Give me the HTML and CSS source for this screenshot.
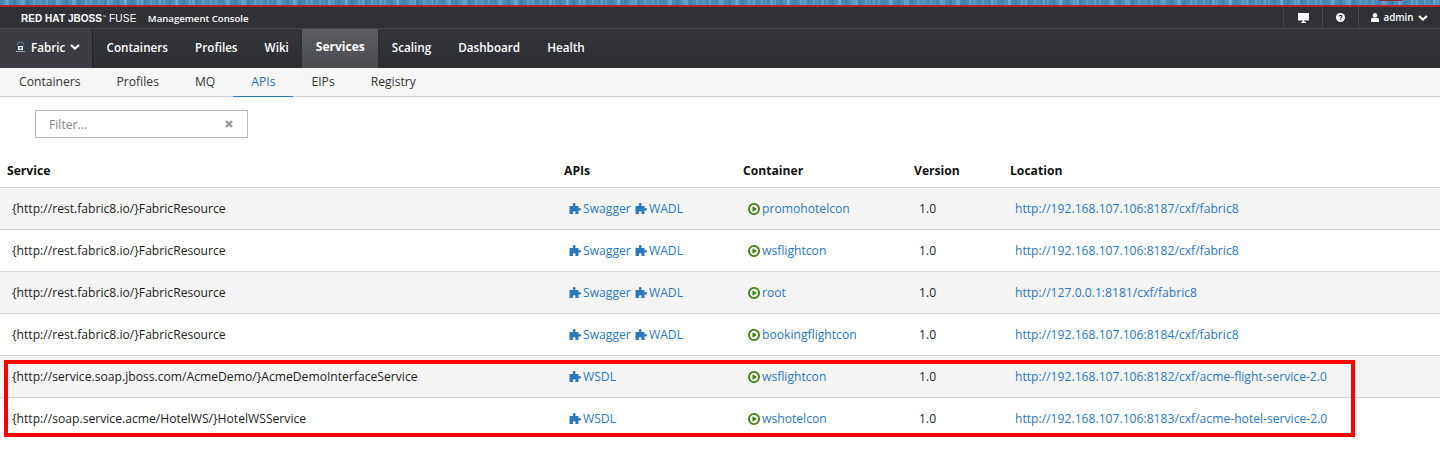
FILE: index.html
```html
<!DOCTYPE html>
<html lang="en">
<head>
    <meta charset="UTF-8">
    <meta name="viewport" content="width=device-width, initial-scale=1.0">
    <title>Red Hat JBoss Fuse Management Console</title>
    <link rel="stylesheet" href="styles.css">
</head>
<body>
    <svg class="defs" width="0" height="0">
        <symbol id="puzzle" viewBox="0 0 12 12">
            <path fill="currentColor" d="M3.800 1.500C3.800.6 4.400 0 5.200 0s1.400.6 1.400 1.500c0 .7-.4 1-.4 1.500H9.500v2.400c.5 0 .8-.4 1.300-.4.700 0 1.200.6 1.200 1.300s-.5 1.300-1.200 1.300c-.5 0-.8-.4-1.300-.4V11H6.300c0-.6.3-.9.300-1.400 0-.8-.6-1.300-1.400-1.300s-1.400.5-1.400 1.300c0 .5.300.8.300 1.400H.5V3h3.700c0-.5-.4-.8-.4-1.500z"/>
        </symbol>
        <symbol id="play" viewBox="0 0 12 12">
            <path fill="#3f7d0f" fill-rule="evenodd" d="M6 0a6 6 0 1 1 0 12A6 6 0 0 1 6 0zm0 1.800a4.200 4.200 0 1 0 0 8.400 4.200 4.200 0 0 0 0-8.400zM4.500 3.300 9 6 4.500 8.700z"/>
        </symbol>
    </svg>

    <div class="strip"></div>

    <div class="brandbar">
        <div class="brand">
            <span class="brand-name">RED HAT JBOSS<sup>&#8482;</sup> <span class="brand-fuse">FUSE</span></span>
            <span class="brand-sub">Management Console</span>
        </div>
        <div class="util">
            <div class="util-item util-screen">
                <svg width="11" height="10" viewBox="0 0 11 10"><path fill="#fff" d="M0 0h11v7.500H6.500V9H8v1H3V9h1.500V7.500H0z"/></svg>
            </div>
            <div class="util-item util-help">
                <svg width="9" height="9" viewBox="0 0 9 9"><circle cx="4.500" cy="4.500" r="4.500" fill="#fff"/><path fill="none" stroke="#2f3135" stroke-width="1.200" d="M3.100 3.500c0-1.700 2.800-1.700 2.800 0 0 1-1.400 1-1.400 2"/><path fill="#2f3135" d="M3.900 6.300h1.200v1.100H3.900z"/></svg>
            </div>
            <div class="util-item util-user">
                <svg width="8" height="9" viewBox="0 0 8 9"><circle cx="4" cy="2.300" r="2.200" fill="#fff"/><path fill="#fff" d="M0 9V6.500C0 5.300 1 4.800 2 4.800h4c1 0 2 .5 2 1.700V9z"/></svg>
                <span>admin</span>
                <svg class="chev" width="10" height="6" viewBox="0 0 10 6"><path fill="none" stroke="#fff" stroke-width="2.200" d="M1 1l4 3.500L9 1"/></svg>
            </div>
        </div>
    </div>

    <nav class="mainnav">
        <a class="perspective">
            <svg width="11" height="13" viewBox="0 0 11 13"><path fill="none" stroke="#5f7fa5" d="M2 5.500a3.500 3.500 0 1 1 7 0"/><path fill="#8fa6c2" d="M1 11h9v1H1z"/><path fill="#e4ecf5" d="M3 6h5v4H3z"/><path fill="#2a5c96" d="M4.500 7h2v2h-2z"/></svg>
            <span>Fabric</span>
            <svg class="chev" width="10" height="6" viewBox="0 0 10 6"><path fill="none" stroke="#fff" stroke-width="2.200" d="M1 1l4 3.500L9 1"/></svg>
        </a>
        <a>Containers</a>
        <a>Profiles</a>
        <a>Wiki</a>
        <a class="active">Services</a>
        <a>Scaling</a>
        <a>Dashboard</a>
        <a>Health</a>
    </nav>

    <nav class="subnav">
        <a>Containers</a>
        <a>Profiles</a>
        <a>MQ</a>
        <a class="active">APIs</a>
        <a>EIPs</a>
        <a>Registry</a>
    </nav>

    <div class="filter-row">
        <div class="filter">
            <span>Filter...</span>
            <svg width="8" height="8" viewBox="0 0 8 8"><path stroke="#999" stroke-width="2.400" d="M1 1l6 6M7 1L1 7"/></svg>
        </div>
    </div>

    <div class="table-wrap">
        <table>
            <thead>
                <tr>
                    <th class="col-service">Service</th>
                    <th class="col-apis">APIs</th>
                    <th class="col-container">Container</th>
                    <th class="col-version">Version</th>
                    <th>Location</th>
                </tr>
            </thead>
            <tbody>
                <tr>
                    <td>{http://rest.fabric8.io/}FabricResource</td>
                    <td><a class="api"><svg><use href="#puzzle"/></svg>Swagger</a> <a class="api"><svg><use href="#puzzle"/></svg>WADL</a></td>
                    <td><a class="con"><svg><use href="#play"/></svg>promohotelcon</a></td>
                    <td>1.0</td>
                    <td><a>http://192.168.107.106:8187/cxf/fabric8</a></td>
                </tr>
                <tr>
                    <td>{http://rest.fabric8.io/}FabricResource</td>
                    <td><a class="api"><svg><use href="#puzzle"/></svg>Swagger</a> <a class="api"><svg><use href="#puzzle"/></svg>WADL</a></td>
                    <td><a class="con"><svg><use href="#play"/></svg>wsflightcon</a></td>
                    <td>1.0</td>
                    <td><a>http://192.168.107.106:8182/cxf/fabric8</a></td>
                </tr>
                <tr>
                    <td>{http://rest.fabric8.io/}FabricResource</td>
                    <td><a class="api"><svg><use href="#puzzle"/></svg>Swagger</a> <a class="api"><svg><use href="#puzzle"/></svg>WADL</a></td>
                    <td><a class="con"><svg><use href="#play"/></svg>root</a></td>
                    <td>1.0</td>
                    <td><a>http://127.0.0.1:8181/cxf/fabric8</a></td>
                </tr>
                <tr>
                    <td>{http://rest.fabric8.io/}FabricResource</td>
                    <td><a class="api"><svg><use href="#puzzle"/></svg>Swagger</a> <a class="api"><svg><use href="#puzzle"/></svg>WADL</a></td>
                    <td><a class="con"><svg><use href="#play"/></svg>bookingflightcon</a></td>
                    <td>1.0</td>
                    <td><a>http://192.168.107.106:8184/cxf/fabric8</a></td>
                </tr>
                <tr>
                    <td>{http://service.soap.jboss.com/AcmeDemo/}AcmeDemoInterfaceService</td>
                    <td><a class="api"><svg><use href="#puzzle"/></svg>WSDL</a></td>
                    <td><a class="con"><svg><use href="#play"/></svg>wsflightcon</a></td>
                    <td>1.0</td>
                    <td><a>http://192.168.107.106:8182/cxf/acme-flight-service-2.0</a></td>
                </tr>
                <tr>
                    <td>{http://soap.service.acme/HotelWS/}HotelWSService</td>
                    <td><a class="api"><svg><use href="#puzzle"/></svg>WSDL</a></td>
                    <td><a class="con"><svg><use href="#play"/></svg>wshotelcon</a></td>
                    <td>1.0</td>
                    <td><a>http://192.168.107.106:8183/cxf/acme-hotel-service-2.0</a></td>
                </tr>
            </tbody>
        </table>
        <div class="callout"></div>
    </div>
</body>
</html>
```

FILE: styles.css
```css
body {
    margin: 0;
    font-family: "Open Sans", sans-serif;
    font-size: 12.150px;
    color: #1c1c1c;
    background: #fff;
}
.defs {
    position: absolute;
}
.strip {
    position: relative;
    height: 5px;
    background-color: #4f8fbd;
    background-image:
        repeating-linear-gradient(90deg, rgba(30, 90, 140, 0.18) 0 3px, transparent 3px 7px, rgba(180, 215, 235, 0.2) 7px 9px, transparent 9px 13px),
        repeating-linear-gradient(90deg, transparent 0 5px, rgba(200, 225, 240, 0.18) 5px 8px, rgba(30, 90, 140, 0.12) 8px 17px);
}
.strip::after {
    content: "";
    position: absolute;
    right: 38px;
    top: 0;
    width: 23px;
    height: 1px;
    background: #8c2f3c;
}
.brandbar {
    display: flex;
    justify-content: space-between;
    box-sizing: border-box;
    height: 24px;
    background: #2f3135;
    border-top: 2px solid #b0272d;
    border-bottom: 1px solid #44464a;
    color: #fff;
}
.brand {
    display: flex;
    align-items: center;
    padding: 2px 0 0 21px;
}
.brand-name {
    font-family: "Liberation Sans", sans-serif;
    font-size: 10px;
    font-weight: bold;
    letter-spacing: 0.05px;
}
.brand-name sup {
    font-size: 4px;
    font-weight: normal;
}
.brand-fuse {
    font-weight: normal;
    letter-spacing: 0.3px;
}
.brand-sub {
    margin-left: 11px;
    font-size: 9.600px;
    font-weight: 600;
}
.util {
    display: flex;
}
.util-item {
    display: flex;
    align-items: center;
    justify-content: center;
    box-sizing: border-box;
    border-left: 1px solid #44464a;
}
.util-screen {
    width: 39px;
}
.util-help {
    width: 36px;
}
.util-user {
    width: 82px;
    gap: 4px;
    font-size: 9.800px;
    font-weight: 600;
}
.mainnav {
    display: flex;
    height: 39px;
    background: linear-gradient(#33353a, #2c2e32);
}
.mainnav a {
    display: flex;
    align-items: center;
    padding: 0 13.500px 4px;
    color: #fff;
    font-size: 11.700px;
    font-weight: 600;
}
.mainnav .perspective {
    gap: 5px;
    width: 93px;
    box-sizing: border-box;
    padding: 0 0 4px 15px;
    background: #3b3d42;
    border-right: 1px solid #232427;
}
.mainnav .active {
    background: linear-gradient(#5b5d61, #4a4c50);
    font-size: 12px;
    font-weight: 700;
}
.subnav {
    display: flex;
    box-sizing: border-box;
    height: 29px;
    background: #f6f6f6;
    border-bottom: 1px solid #cfcfcf;
}
.subnav a {
    display: flex;
    align-items: center;
    padding: 0 18px 2px;
    color: #333;
    font-size: 12.150px;
}
.subnav a:first-child {
    padding-left: 19px;
}
.subnav .active {
    color: #1f6fb2;
    box-shadow: 0 1px 0 #2b78bd;
}
.filter-row {
    padding: 13px 0 0 35px;
}
.filter {
    display: flex;
    align-items: center;
    justify-content: space-between;
    box-sizing: border-box;
    width: 213px;
    height: 28px;
    padding: 0 14px 0 13px;
    border: 1px solid #bbb;
    color: #888;
}
.table-wrap {
    position: relative;
    margin-top: 13px;
}
table {
    width: 100%;
    border-collapse: collapse;
    table-layout: fixed;
}
th {
    height: 36px;
    padding: 3px 0 0 7px;
    text-align: left;
    font-weight: 700;
    color: #111;
    box-sizing: border-box;
}
td {
    height: 42px;
    padding: 0 0 0 12px;
    border-top: 1px solid #d6d6d6;
    box-sizing: border-box;
    white-space: nowrap;
}
tbody tr:nth-child(odd) {
    background: #f5f5f5;
}
.col-service {
    width: 557px;
}
.col-apis {
    width: 179px;
}
.col-container {
    width: 171px;
}
.col-version {
    width: 96px;
}
td a {
    color: #2b78bd;
}
td svg {
    width: 12px;
    height: 12px;
    margin-right: 2px;
    vertical-align: -2px;
}
.api + .api {
    margin-left: 1px;
}
.callout {
    position: absolute;
    left: 4px;
    top: 209px;
    width: 1351px;
    height: 77px;
    box-sizing: border-box;
    border: 4px solid #f00;
}
```
